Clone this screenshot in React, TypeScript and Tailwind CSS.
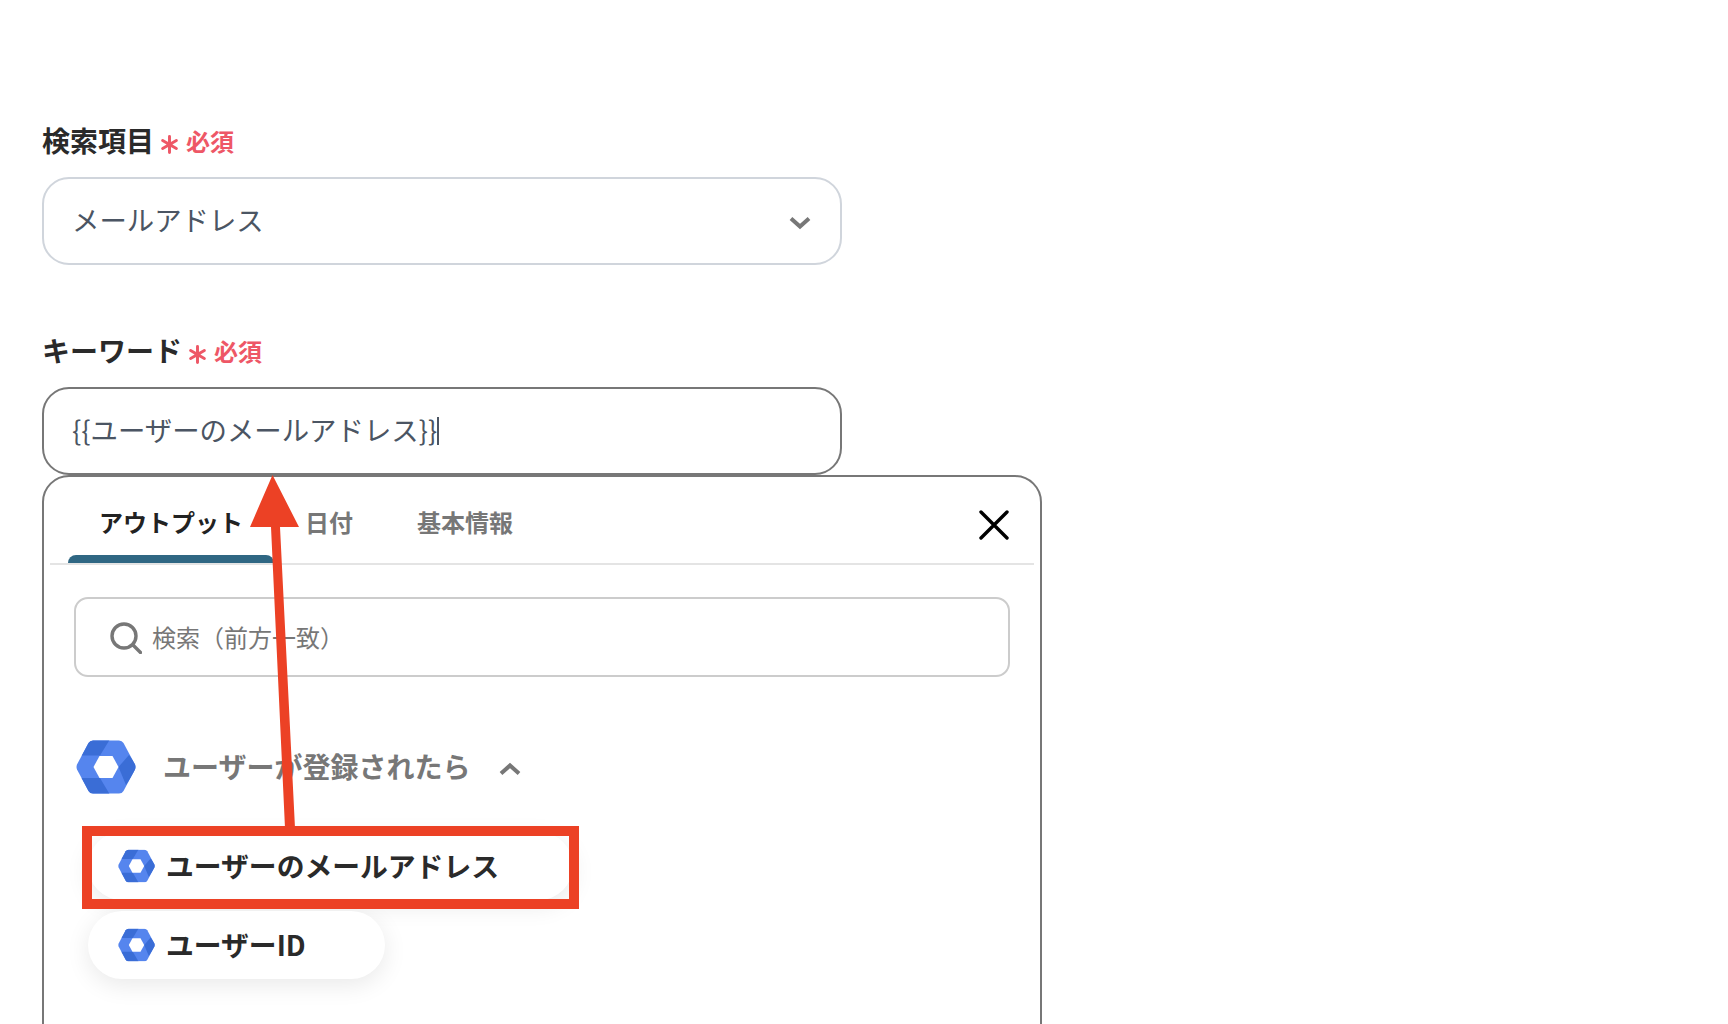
import React from "react";

const FONT = "font-['Noto_Sans_CJK_JP','Noto_Sans',sans-serif]";

function Logo({ className }: { className: string }) {
  return (
    <svg viewBox="0 0 60 54" className={className}>
      <clipPath id="hexclip">
        <path d="M12.5 3 Q14 0.5 17 0.5 L43 0.5 Q46 0.5 47.5 3 L59 24.5 Q60 27 59 29.5 L47.5 51 Q46 53.5 43 53.5 L17 53.5 Q14 53.5 12.5 51 L1 29.5 Q0 27 1 24.5 Z" />
      </clipPath>
      <g clipPath="url(#hexclip)">
        <rect width="60" height="54" fill="#5585ee" />
        <polygon points="10,0 33.5,0 24,15.5 2,15.5" fill="#3a6dd6" />
        <polygon points="53,15 62,27 50,45 42.5,27" fill="#3a6dd6" />
        <polygon points="2,38 24,38 33.5,54 10,54" fill="#3a6dd6" />
      </g>
      <polygon points="17.5,27 23.5,16 36.5,16 42.5,27 36.5,38 23.5,38" fill="#fff" />
    </svg>
  );
}

function Label({ text }: { text: string }) {
  return (
    <div className="flex items-center h-[36px]">
      <span className="text-[28px] font-bold text-[#2a2a2a] leading-[36px] -mt-[2px]">{text}</span>
      <span className="ml-[6px] flex items-center text-[#ee5766] font-bold text-[24px] leading-[36px]">
        <svg viewBox="0 0 18 18" className="w-[19px] h-[19px] mt-[6px] mr-[7px]" stroke="#ee5766" strokeWidth="2.8" strokeLinecap="round">
          <path d="M9 1.5V16.5M2.5 5.2L15.5 12.8M15.5 5.2L2.5 12.8" />
        </svg>
        必須
      </span>
    </div>
  );
}

function Pill({ text, className }: { text: string; className: string }) {
  return (
    <div className={`flex items-center h-[68px] rounded-[34px] bg-white pl-[30px] shadow-[0_6px_24px_rgba(0,0,0,0.09)] ${className}`}>
      <Logo className="w-[37px] h-[34px] shrink-0" />
      <span className="ml-[11px] text-[27.8px] font-bold text-[#2a2a2a] leading-none">{text}</span>
    </div>
  );
}

export default function App() {
  return (
    <div className={`relative h-[1024px] w-[1728px] overflow-hidden bg-white pl-[42px] pt-[123px] ${FONT}`}>
      <Label text="検索項目" />
      <div className="mt-[18px] flex h-[88px] w-[800px] items-center justify-between rounded-[27px] border-2 border-[#d0d5dc] pl-[28px] pr-[28px]">
        <span className="text-[27.4px] text-[#4b5563] leading-none -mt-[2px]">メールアドレス</span>
        <svg viewBox="0 0 24 24" className="w-[24px] h-[24px] mt-[4px]" fill="none" stroke="#777" strokeWidth="4">
          <path d="M3 7.5L12 15.5L21 7.5" />
        </svg>
      </div>

      <div className="mt-[68px]">
        <Label text="キーワード" />
      </div>
      <div className="mt-[18px] flex h-[88px] w-[800px] items-center rounded-[27px] border-2 border-[#777] pl-[28px]">
        <span className="text-[27.4px] text-[#4b5563] leading-none -mt-[2px]">{"{{ユーザーのメールアドレス}}"}</span>
        <span className="h-[28px] w-[2px] bg-[#4b5563]" />
      </div>

      <div className="h-[640px] w-[1000px] rounded-[27px] border-2 border-[#777] bg-white px-[6px]">
        <div className="relative flex h-[88px] border-b-2 border-[#e4e4e4] pl-[18px]">
          <div className="relative flex items-center px-[31px] pt-[4px] text-[24px] font-bold text-[#222]">
            アウトプット
            <div className="absolute bottom-0 left-0 right-0 h-[8px] rounded-t-[8px] bg-[#2f6783]" />
          </div>
          <div className="flex items-center pl-[31px] pr-[33px] pt-[4px] text-[24px] font-bold text-[#777]">日付</div>
          <div className="flex items-center px-[31px] pt-[4px] text-[24px] font-bold text-[#777]">基本情報</div>
          <svg viewBox="0 0 30 30" className="absolute right-[25px] top-[33px] w-[30px] h-[30px]" stroke="#000" strokeWidth="3.4" strokeLinecap="round">
            <path d="M2 2L28 28M28 2L2 28" />
          </svg>
        </div>

        <div className="ml-[24px] mt-[32px] flex h-[80px] w-[936px] items-center rounded-[14px] border-2 border-[#ccc] pl-[34px]">
          <svg viewBox="0 0 32 32" className="w-[32px] h-[32px] mt-[2px]" fill="none" stroke="#777" strokeWidth="3.4" strokeLinecap="round">
            <circle cx="14" cy="14" r="12" />
            <path d="M23 23L30.5 30.5" />
          </svg>
          <span className="ml-[10px] text-[24px] text-[#777] leading-none">検索（前方一致）</span>
        </div>

        <div className="ml-[26px] mt-[62px] flex h-[56px] items-center">
          <Logo className="w-[60px] h-[54px] shrink-0" />
          <span className="ml-[27px] text-[28px] font-bold text-[#777] leading-none -mt-[2px]">ユーザーが登録されたら</span>
          <svg viewBox="0 0 24 24" className="ml-[28px] mt-[4px] w-[24px] h-[24px]" fill="none" stroke="#777" strokeWidth="4">
            <path d="M3 16.5L12 8.5L21 16.5" />
          </svg>
        </div>

        <Pill text="ユーザーのメールアドレス" className="ml-[38px] mt-[37px] w-[485px]" />
        <Pill text="ユーザーID" className="ml-[38px] mt-[11px] w-[297px]" />
      </div>

      <svg className="absolute left-0 top-0 w-[1728px] h-[1024px] pointer-events-none" viewBox="0 0 1728 1024">
        <polygon points="272.5,475 299,527 280,527 295,828 285,828 271,527 250,527" fill="#ec4125" />
      </svg>
      <div className="absolute left-[82px] top-[826px] h-[83px] w-[497px] border-[10px] border-[#ec4125]" />
    </div>
  );
}
